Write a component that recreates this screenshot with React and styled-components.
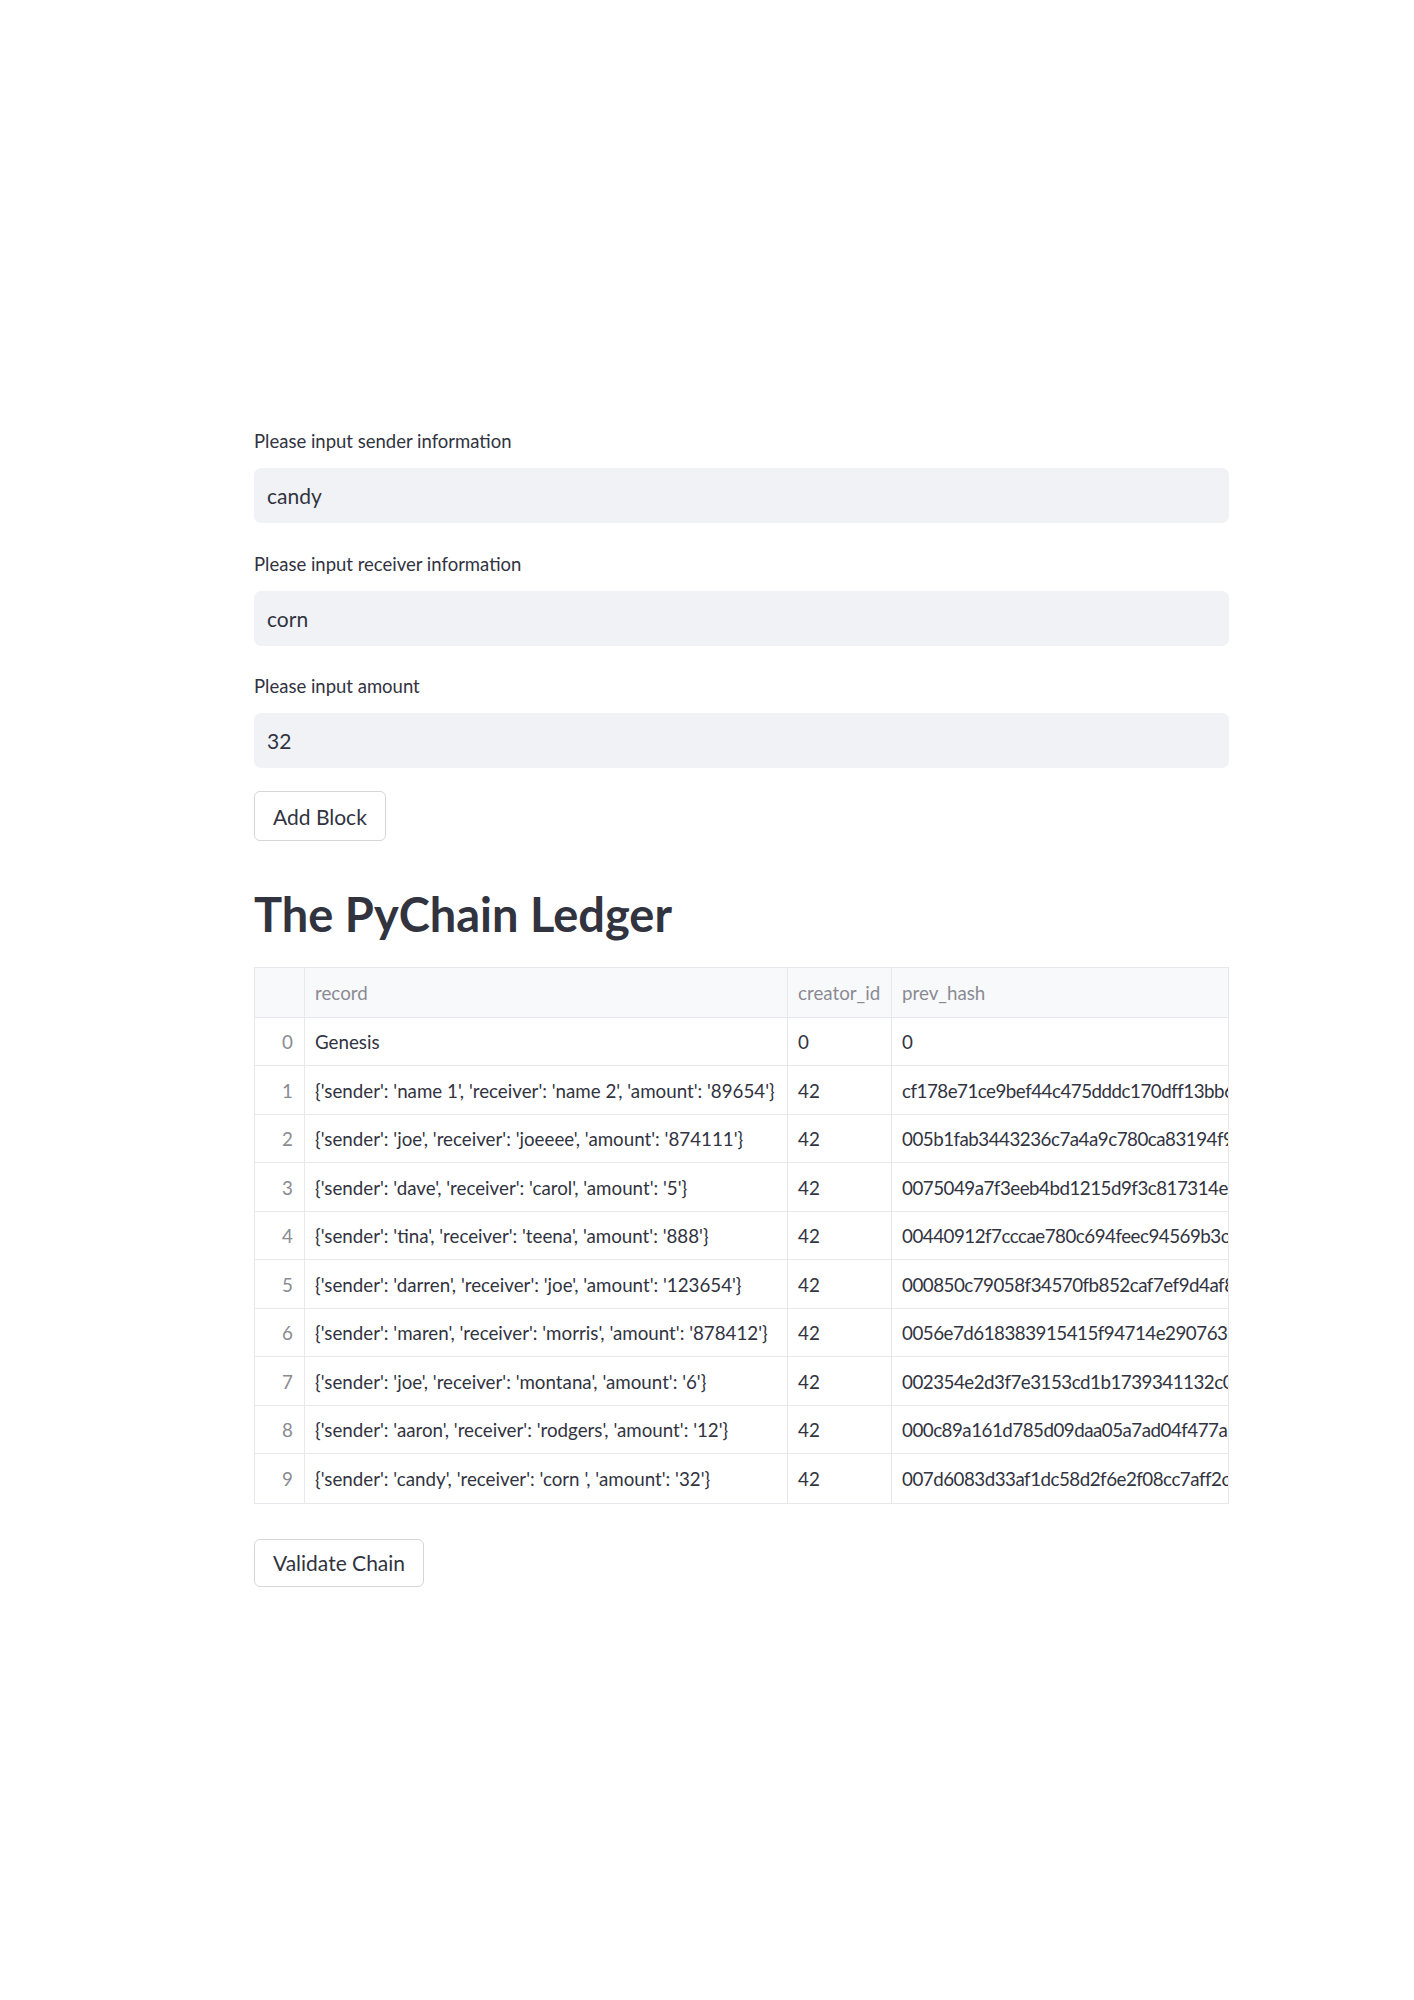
import React from 'react';
import styled, { createGlobalStyle } from 'styled-components';

const GlobalStyle = createGlobalStyle`
  body {
    margin: 0;
    background: #ffffff;
    font-family: 'Lato', 'Liberation Sans', sans-serif;
    color: #31333f;
  }
`;

const Main = styled.main`
  width: 975px;
  margin-left: 254px;
  padding-top: 428px;
  padding-bottom: 300px;
`;

const Form = styled.div`
  display: flex;
  flex-direction: column;
  gap: 27.5px;
  margin-bottom: 23px;
`;

const Field = styled.div`
  display: flex;
  flex-direction: column;
`;

const Label = styled.label`
  font-size: 18.5px;
  line-height: 26px;
  margin-bottom: 14px;
  color: #31333f;
`;

const Input = styled.input`
  box-sizing: border-box;
  height: 55px;
  width: 100%;
  border: none;
  border-radius: 7px;
  background: #f0f2f6;
  padding: 0 13px;
  font-family: inherit;
  font-size: 21px;
  color: #31333f;
  outline: none;
`;

const Button = styled.button`
  box-sizing: border-box;
  display: inline-flex;
  align-items: center;
  justify-content: center;
  height: ${({ $tall }) => ($tall ? '50px' : '48px')};
  padding: 0 18px;
  border: 1px solid #d6d6d9;
  border-radius: 6px;
  background: #ffffff;
  font-family: inherit;
  font-size: 21px;
  color: #31333f;
  cursor: pointer;
`;

const Heading = styled.h1`
  margin: 44.6px 0 25px;
  font-size: 47px;
  line-height: 1.2;
  font-weight: 700;
  color: #31333f;
`;

const TableBox = styled.div`
  box-sizing: border-box;
  width: 975px;
  border: 1px solid #e6e8ec;
  overflow: hidden;
  margin-bottom: 35px;
`;

const Row = styled.div`
  display: grid;
  grid-template-columns: 50px 483px 104px 1fr;
  box-sizing: border-box;
  height: ${({ $head }) => ($head ? '50px' : '48.5px')};
  border-bottom: 1px solid #e6e8ec;
  background: ${({ $head }) => ($head ? '#f8f9fb' : '#ffffff')};

  &:last-child {
    border-bottom: none;
  }
`;

const Cell = styled.div`
  box-sizing: border-box;
  display: flex;
  align-items: center;
  justify-content: ${({ $index }) => ($index ? 'flex-end' : 'flex-start')};
  padding: ${({ $index }) => ($index ? '0 11px 0 0' : '0 0 0 10px')};
  border-right: 1px solid #e6e8ec;
  font-size: 18.75px;
  letter-spacing: ${({ $hash }) => ($hash ? '-0.5px' : 'normal')};
  white-space: nowrap;
  overflow: hidden;
  color: ${({ $muted }) => ($muted ? '#8a8b92' : '#31333f')};

  &:last-child {
    border-right: none;
  }
`;

const rows = [
  ['Genesis', '0', '0'],
  ["{'sender': 'name 1', 'receiver': 'name 2', 'amount': '89654'}", '42', 'cf178e71ce9bef44c475dddc170dff13bb6a2e4'],
  ["{'sender': 'joe', 'receiver': 'joeeee', 'amount': '874111'}", '42', '005b1fab3443236c7a4a9c780ca83194f96c1d8'],
  ["{'sender': 'dave', 'receiver': 'carol', 'amount': '5'}", '42', '0075049a7f3eeb4bd1215d9f3c817314e8b2a71'],
  ["{'sender': 'tina', 'receiver': 'teena', 'amount': '888'}", '42', '00440912f7cccae780c694feec94569b3c4e0f2'],
  ["{'sender': 'darren', 'receiver': 'joe', 'amount': '123654'}", '42', '000850c79058f34570fb852caf7ef9d4af89b3c'],
  ["{'sender': 'maren', 'receiver': 'morris', 'amount': '878412'}", '42', '0056e7d618383915415f94714e29076361a8d04'],
  ["{'sender': 'joe', 'receiver': 'montana', 'amount': '6'}", '42', '002354e2d3f7e3153cd1b1739341132c01f7e95'],
  ["{'sender': 'aaron', 'receiver': 'rodgers', 'amount': '12'}", '42', '000c89a161d785d09daa05a7ad04f477a3e6c20'],
  ["{'sender': 'candy', 'receiver': 'corn ', 'amount': '32'}", '42', '007d6083d33af1dc58d2f6e2f08cc7aff2c7b94'],
];

const fields = [
  ['Please input sender information', 'candy'],
  ['Please input receiver information', 'corn'],
  ['Please input amount', '32'],
];

export default function App() {
  return (
    <>
      <GlobalStyle />
      <Main>
        <Form>
          {fields.map(([label, value]) => (
            <Field key={label}>
              <Label>{label}</Label>
              <Input defaultValue={value} />
            </Field>
          ))}
        </Form>
        <Button $tall>Add Block</Button>

        <Heading>The PyChain Ledger</Heading>

        <TableBox>
          <Row $head>
            <Cell />
            <Cell $muted>record</Cell>
            <Cell $muted>creator_id</Cell>
            <Cell $muted>prev_hash</Cell>
          </Row>
          {rows.map(([record, creator, hash], i) => (
            <Row key={i}>
              <Cell $index $muted>{i}</Cell>
              <Cell>{record}</Cell>
              <Cell>{creator}</Cell>
              <Cell $hash>{hash}</Cell>
            </Row>
          ))}
        </TableBox>

        <Button>Validate Chain</Button>
      </Main>
    </>
  );
}
